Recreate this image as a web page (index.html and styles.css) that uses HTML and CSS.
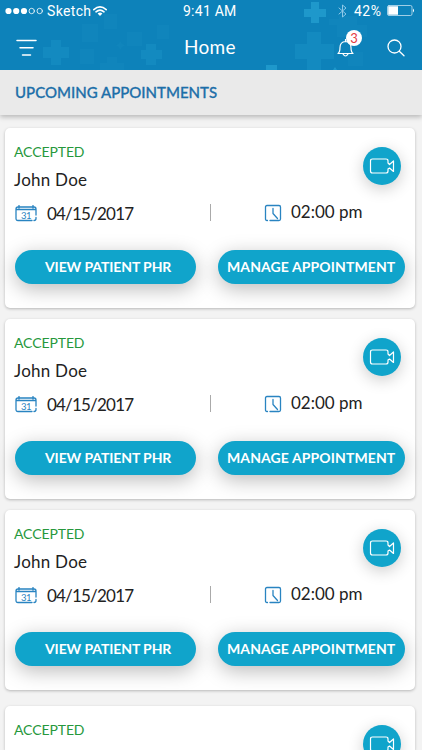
FILE: index.html
```html
<!DOCTYPE html>
<html lang="en">
<head>
    <meta charset="UTF-8">
    <meta name="viewport" content="width=device-width, initial-scale=1.0">
    <title>Home - Upcoming Appointments</title>
    <link rel="stylesheet" href="styles.css">
</head>
<body>
    <svg class="sprite" aria-hidden="true">
        <symbol id="calendar" viewBox="0 0 22 17">
            <path d="M17 15.5H3Q1 15.5 1 13.5V4Q1 2 3 2H19Q21 2 21 4V10M21 12.5V13.5Q21 15.5 19 15.5M1 4.5H21M4 .5V3M18 .5V3" />
            <text x="11" y="13.7" text-anchor="middle">31</text>
        </symbol>
        <symbol id="clock" viewBox="0 0 18 18">
            <path d="M3.5 16.5H3Q1.5 16.5 1.5 15V3Q1.5 1.5 3 1.5H15Q16.5 1.5 16.5 3V15Q16.5 16.5 15 16.5H6M9 4.5V9.5L13.5 14.5" />
        </symbol>
        <symbol id="video" viewBox="0 0 26 18">
            <path d="M19 6V4Q19 2 17 2H3.5Q1.5 2 1.5 4V14Q1.5 16 3.5 16H17Q19 16 19 14V12M19 6L20.5 7.5L24.5 4V14.5L20.5 11L19 12" />
        </symbol>
    </svg>

    <header class="header">
        <svg class="pattern" viewBox="0 0 422 70">
            <path class="plus-soft" d="M51 40h10v7h8v11h-8v7H51v-7h-8V47h8zM146 44h10v6h6v9h-6v6h-10v-6h-5v-9h5z" />
            <path class="plus-faint" d="M107 57h10v6h7v7h-24v-7h7zM127 32h15v14h-15zM80 49h14v15H80zM82 24h16v18H82zM104 14h13v15h-13zM157 25h12v14h-12zM120 41l2 3 3 1-3 2-2 3-1-3-3-2 3-1z" />
            <path class="plus-soft" d="M307 32h14v12h13v15h-13v11h-14V59h-12V44h12z" />
            <path class="plus-faint" d="M339 16h18v9h10v12h-30V25h-8v-6h10zM348 52h15v14h-15z" />
            <path class="plus-bright" d="M311 2h8v7h7v8h-7v6h-8v-6h-7V9h7zM266 65h11v5h-11zM333 70l2-3 2 3z" />
        </svg>
        <div class="status">
            <svg class="signal" viewBox="0 0 39 8">
                <g fill="#fff"><circle cx="3.5" cy="4" r="3.1" /><circle cx="11.2" cy="4" r="3.1" /><circle cx="19" cy="4" r="3.1" /></g>
                <g fill="none" stroke="#fff" stroke-width=".8"><circle cx="26.7" cy="4" r="2.7" /><circle cx="34.7" cy="4" r="2.7" /></g>
            </svg>
            <span class="carrier">Sketch</span>
            <svg class="wifi" viewBox="0 0 14 10">
                <path d="M.8 3.6Q7-1.8 13.2 3.6M3 5.8Q7 2.3 11 5.8" />
                <path class="wifi-dot" d="M4.6 7.5Q7 5.5 9.4 7.5L7 9.9z" />
            </svg>
            <span class="time">9:41 AM</span>
            <svg class="bluetooth" viewBox="0 0 9 14"><path d="M1 4L8 10L4.5 13V1L8 4L1 10" /></svg>
            <span class="percent">42%</span>
            <svg class="battery" viewBox="0 0 28 11">
                <rect x=".5" y=".5" width="24.5" height="10" rx="1.5" />
                <path class="battery-level" d="M1.2 1.2H11V9.8H1.2zM26 3.5Q28 5.5 26 7.5z" />
            </svg>
        </div>
        <nav class="navbar">
            <svg class="menu" viewBox="0 0 21 18"><path d="M1 1.5H20M4 8.8H17M6.5 16H14.5" /></svg>
            <h1>Home</h1>
            <div class="notifications">
                <svg class="bell" viewBox="0 0 17 18"><path d="M1 14.5Q3 13 3 8.5Q3 3 8.5 2.5Q14 3 14 8.5Q14 13 16 14.5ZM6 15Q8.5 19 11 15M8.5 2.5V.5" /></svg>
                <span class="badge">3</span>
            </div>
            <svg class="search" viewBox="0 0 18 18"><circle cx="7.5" cy="7.5" r="6.5" /><path d="M12.3 12.3L17 16.8" /></svg>
        </nav>
    </header>

    <h2 class="section-title">UPCOMING APPOINTMENTS</h2>

    <main class="appointments">
        <section class="card">
            <div class="card-top">
                <div>
                    <div class="state">ACCEPTED</div>
                    <div class="name">John Doe</div>
                </div>
                <div class="call"><svg><use href="#video" /></svg></div>
            </div>
            <div class="details">
                <svg class="calendar"><use href="#calendar" /></svg>
                <span class="date">04/15/2017</span>
                <span class="divider"></span>
                <svg class="clock"><use href="#clock" /></svg>
                <span class="hour">02:00 pm</span>
            </div>
            <div class="actions">
                <button class="btn view">VIEW PATIENT PHR</button>
                <button class="btn manage">MANAGE APPOINTMENT</button>
            </div>
        </section>

        <section class="card">
            <div class="card-top">
                <div>
                    <div class="state">ACCEPTED</div>
                    <div class="name">John Doe</div>
                </div>
                <div class="call"><svg><use href="#video" /></svg></div>
            </div>
            <div class="details">
                <svg class="calendar"><use href="#calendar" /></svg>
                <span class="date">04/15/2017</span>
                <span class="divider"></span>
                <svg class="clock"><use href="#clock" /></svg>
                <span class="hour">02:00 pm</span>
            </div>
            <div class="actions">
                <button class="btn view">VIEW PATIENT PHR</button>
                <button class="btn manage">MANAGE APPOINTMENT</button>
            </div>
        </section>

        <section class="card">
            <div class="card-top">
                <div>
                    <div class="state">ACCEPTED</div>
                    <div class="name">John Doe</div>
                </div>
                <div class="call"><svg><use href="#video" /></svg></div>
            </div>
            <div class="details">
                <svg class="calendar"><use href="#calendar" /></svg>
                <span class="date">04/15/2017</span>
                <span class="divider"></span>
                <svg class="clock"><use href="#clock" /></svg>
                <span class="hour">02:00 pm</span>
            </div>
            <div class="actions">
                <button class="btn view">VIEW PATIENT PHR</button>
                <button class="btn manage">MANAGE APPOINTMENT</button>
            </div>
        </section>

        <section class="card last">
            <div class="card-top">
                <div class="state">ACCEPTED</div>
                <div class="call"><svg><use href="#video" /></svg></div>
            </div>
        </section>
    </main>
</body>
</html>
```
FILE: styles.css
```css
* {
    margin: 0;
    padding: 0;
    box-sizing: border-box;
}

body {
    width: 422px;
    height: 750px;
    overflow: hidden;
    font-family: Lato, "Liberation Sans", sans-serif;
    background: #f3f3f3;
    color: #222;
    white-space: nowrap;
}

svg {
    display: block;
    flex: none;
    fill: none;
    stroke-linecap: round;
    stroke-linejoin: round;
}

.sprite {
    display: none;
}

.header {
    position: relative;
    height: 70px;
    background: #0d82ba;
    color: #fff;
}

.pattern {
    position: absolute;
    top: 0;
    left: 0;
    width: 422px;
    height: 70px;
}

.plus-soft {
    fill: #1a91c5;
    opacity: 0.5;
}

.plus-faint {
    fill: #1a91c5;
    opacity: 0.25;
}

.plus-bright {
    fill: #239ed0;
    opacity: 0.8;
}

.status {
    position: relative;
    display: flex;
    align-items: center;
    height: 20px;
    padding: 1px 7px 0 5px;
    font-family: Roboto, sans-serif;
    font-size: 14px;
}

.signal {
    width: 39px;
    height: 8px;
}

.carrier {
    width: 46px;
    margin-left: 3px;
    letter-spacing: 0.35px;
}

.wifi {
    width: 14px;
    height: 10px;
    margin-left: 0;
    stroke: #fff;
    stroke-width: 1.6;
}

.wifi-dot {
    fill: #fff;
    stroke: none;
}

.time {
    width: 56px;
    margin-left: 76px;
    letter-spacing: 0.25px;
}

.bluetooth {
    width: 9px;
    height: 14px;
    margin-left: auto;
    stroke: #8cc8e8;
}

.percent {
    width: 28px;
    margin: 0 5px 0 7px;
    letter-spacing: 0.5px;
}

.battery {
    width: 28px;
    height: 11px;
    stroke: #c5e2f1;
    stroke-width: 0.8;
}

.battery-level {
    fill: #fff;
    stroke: none;
}

.navbar {
    position: relative;
    display: flex;
    align-items: center;
    height: 50px;
    padding: 6px 17px 0 16px;
}

.menu {
    width: 21px;
    height: 18px;
    margin-top: -1px;
    stroke: #fff;
    stroke-width: 1.5;
}

.navbar h1 {
    width: 60px;
    margin: -4px 0 0 147px;
    font-size: 19px;
    font-weight: 400;
    letter-spacing: 0.3px;
}

.notifications {
    position: relative;
    margin: -1px 33px 0 auto;
}

.bell {
    width: 17px;
    height: 18px;
    stroke: #fff;
    stroke-width: 1.2;
}

.badge {
    position: absolute;
    top: -9px;
    left: 9px;
    width: 16px;
    height: 16px;
    border-radius: 50%;
    background: #fff;
    color: #e33b42;
    font-size: 13px;
    line-height: 16px;
    text-align: center;
}

.search {
    width: 18px;
    height: 18px;
    margin-top: -1px;
    stroke: #fff;
    stroke-width: 1.3;
}

.section-title {
    height: 45px;
    padding-left: 15px;
    background: #eaeaea;
    box-shadow: 0 2px 5px rgba(0, 0, 0, 0.25);
    color: #1d6fa9;
    font-size: 15px;
    font-weight: 500;
    line-height: 44px;
    -webkit-text-stroke: 0.3px #1d6fa9;
}

.appointments {
    display: flex;
    flex-direction: column;
    gap: 11px;
    padding: 13px 7px 0 5px;
}

.card {
    flex: none;
    height: 180px;
    padding: 14px 10px 0 9px;
    border-radius: 5px;
    background: #fff;
    box-shadow: 0 1px 3px rgba(0, 0, 0, 0.25);
}

.card.last {
    height: 44px;
    margin-top: 5px;
    border-radius: 5px 5px 0 0;
}

.card.last .card-top {
    height: 30px;
}

.card-top {
    display: flex;
    justify-content: space-between;
    height: 54px;
}

.state {
    height: 20px;
    color: #26983c;
    font-size: 14px;
    line-height: 19px;
    letter-spacing: -0.1px;
}

.name {
    margin-top: 7px;
    font-size: 17px;
    line-height: 22px;
    letter-spacing: 0.25px;
}

.call {
    display: flex;
    flex: none;
    align-items: center;
    justify-content: center;
    width: 38px;
    height: 38px;
    margin: 5px 4px 0 0;
    border-radius: 50%;
    background: #10a4cb;
    box-shadow: 0 4px 16px rgba(0, 0, 0, 0.2);
}

.call svg {
    width: 26px;
    height: 18px;
    stroke: #fff;
    stroke-width: 1.2;
}

.details {
    display: flex;
    align-items: center;
    height: 34px;
    font-size: 17px;
}

.calendar {
    width: 22px;
    height: 17px;
    margin-left: 1px;
    stroke: #2984c1;
    stroke-width: 1.3;
}

#calendar text {
    fill: #2984c1;
    stroke: none;
    font-size: 9.5px;
    letter-spacing: -0.6px;
}

.date {
    width: 90px;
    margin: 0 0 0 10px;
    letter-spacing: -0.8px;
}

.divider {
    width: 1px;
    height: 17px;
    margin: -2px 0 0 73px;
    background: #aaa;
}

.clock {
    width: 18px;
    height: 18px;
    margin: -1px 0 0 53px;
    stroke: #2984c1;
    stroke-width: 1.3;
}

.hour {
    margin: -4px 0 0 9px;
}

.actions {
    display: flex;
    gap: 22px;
    margin: 20px 0 0 1px;
}

.btn {
    height: 34px;
    border: 0;
    border-radius: 17px;
    background: #10a4cb;
    box-shadow: 0 5px 20px rgba(0, 0, 0, 0.27);
    color: #fff;
    font-family: inherit;
    font-size: 14px;
    font-weight: 700;
    line-height: 34px;
    text-align: left;
}

.view {
    width: 181px;
    padding-left: 30px;
    letter-spacing: -0.1px;
}

.manage {
    width: 187px;
    padding-left: 9px;
    letter-spacing: 0.1px;
}
```
